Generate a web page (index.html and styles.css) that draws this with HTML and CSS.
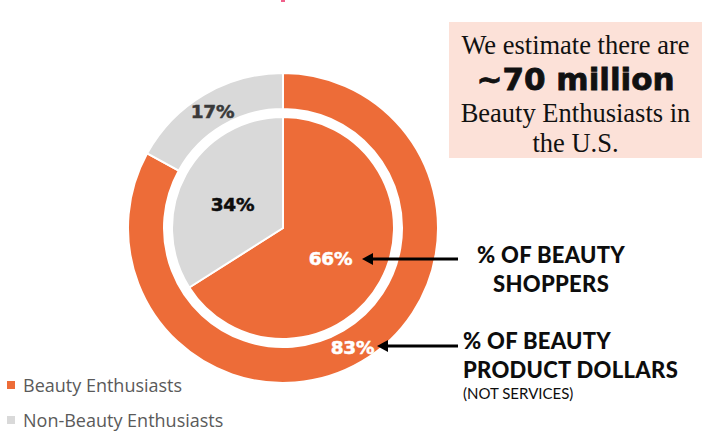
FILE: index.html
```html
<!DOCTYPE html>
<html lang="en">
<head>
<meta charset="utf-8">
<title>Beauty Enthusiasts</title>
<link rel="stylesheet" href="styles.css">
</head>
<body>
<div class="page">
  <span class="top-mark"></span>
  <div class="chart-col">
    <svg class="chart" width="310" height="310" viewBox="0 0 310 310">
      <path class="seg orange" d="M155,0 A155,155 0 1 1 19.17,80.32 L50.72,97.67 A119,119 0 1 0 155,36 Z"/>
      <path class="seg gray" d="M19.17,80.32 A155,155 0 0 1 155,0 L155,36 A119,119 0 0 0 50.72,97.67 Z"/>
      <path class="seg orange" d="M155,155 L155,44 A111,111 0 1 1 61.28,214.47 Z"/>
      <path class="seg gray" d="M155,155 L61.28,214.47 A111,111 0 0 1 155,44 Z"/>
      <text class="pct dark" x="84.5" y="45">17%</text>
      <text class="pct black" x="104.5" y="138">34%</text>
      <text class="pct white" x="202.5" y="192">66%</text>
      <text class="pct white" x="224.5" y="281">83%</text>
    </svg>
    <ul class="legend">
      <li><span class="swatch sw-orange"></span>Beauty Enthusiasts</li>
      <li><span class="swatch sw-gray"></span>Non-Beauty Enthusiasts</li>
    </ul>
  </div>
  <div class="info-col">
    <div class="estimate">
      <p class="serif">We estimate there are</p>
      <p class="big">~70 million</p>
      <p class="serif">Beauty Enthusiasts in the U.S.</p>
    </div>
    <p class="label label-shoppers">% OF BEAUTY<br>SHOPPERS</p>
    <div class="label label-dollars">
      <p>% OF BEAUTY<br>PRODUCT DOLLARS</p>
      <p class="note">(NOT SERVICES)</p>
    </div>
  </div>
  <svg class="arrow arrow-1" width="96" height="14" viewBox="0 0 96 14">
    <line x1="8" y1="7" x2="96" y2="7" stroke="#000" stroke-width="3"/>
    <polygon points="0,7 11,1 11,13" fill="#000"/>
  </svg>
  <svg class="arrow arrow-2" width="81" height="14" viewBox="0 0 81 14">
    <line x1="8" y1="7" x2="81" y2="7" stroke="#000" stroke-width="3"/>
    <polygon points="0,7 11,1 11,13" fill="#000"/>
  </svg>
</div>
</body>
</html>
```

FILE: styles.css
```css
* { box-sizing: border-box; }
html, body { margin: 0; padding: 0; background: #fff; }
body { font-family: "Lato", "Liberation Sans", sans-serif; }

.page {
  position: relative;
  width: 709px;
  height: 445px;
  overflow: hidden;
  display: grid;
  grid-template-columns: 449px 260px;
}

.top-mark {
  position: absolute;
  left: 281px;
  top: 0;
  width: 4px;
  height: 2px;
  background: #f0608a;
}

.chart-col {
  display: grid;
  grid-template-areas: "stack";
}
.chart {
  grid-area: stack;
  margin: 73px 0 0 128px;
  display: block;
}
.seg { stroke: #fff; stroke-width: 2; stroke-linejoin: miter; }
.orange { fill: #ed6c38; }
.gray { fill: #d9d9d9; }
.pct {
  font-family: "DejaVu Sans", sans-serif;
  font-weight: 700;
  font-size: 18.5px;
  letter-spacing: -0.3px;
  text-anchor: middle;
  stroke-width: 0.5px;
}
.pct.dark { fill: #3a3a3a; stroke: #3a3a3a; }
.pct.black { fill: #0d0d0d; stroke: #0d0d0d; }
.pct.white { fill: #fff; stroke: #fff; }

.legend {
  grid-area: stack;
  align-self: end;
  list-style: none;
  margin: 0 0 15px 7px;
  padding: 0;
  display: flex;
  flex-direction: column;
  gap: 15px;
}
.legend li {
  display: flex;
  align-items: center;
  gap: 8px;
  font-family: "Open Sans", sans-serif;
  font-size: 18px;
  line-height: 20px;
  color: #5a5a5a;
}
.swatch { width: 8px; height: 8px; display: inline-block; }
.sw-orange { background: #ed6c38; }
.sw-gray { background: #d9d9d9; }

.info-col {
  display: flex;
  flex-direction: column;
  align-items: flex-start;
}
.estimate {
  margin-top: 22px;
  width: 253px;
  height: 136px;
  background: #fce1d8;
  text-align: center;
  color: #111;
  padding-top: 8px;
}
.estimate p { margin: 0; }
.serif {
  font-family: "Liberation Serif", "Times New Roman", serif;
  font-size: 26.5px;
  line-height: 30px;
}
.big {
  font-family: "DejaVu Sans", sans-serif;
  font-weight: 700;
  font-size: 31px;
  line-height: 38px;
  letter-spacing: 0;
  -webkit-text-stroke: 0.8px #111;
}

.label {
  margin: 0;
  font-family: "Lato", sans-serif;
  font-weight: 900;
  font-size: 22px;
  line-height: 29px;
  color: #0d0d0d;
  letter-spacing: 0.3px;
}
.label p { margin: 0; }
.label-shoppers {
  margin-top: 82px;
  margin-left: 28px;
  text-align: center;
}
.label-dollars {
  margin-top: 28px;
  margin-left: 14px;
}
.label .note {
  font-weight: 400;
  font-size: 15px;
  line-height: 18px;
  letter-spacing: 0;
}

.arrow { position: absolute; display: block; }
.arrow-1 { left: 362px; top: 252px; }
.arrow-2 { left: 377px; top: 339px; }
```
